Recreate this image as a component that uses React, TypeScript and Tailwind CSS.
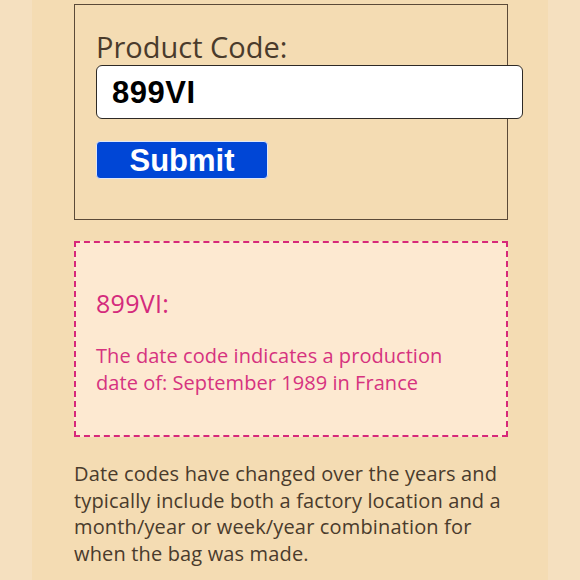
export default function App() {
  const body = { fontFamily: '"Open Sans", "Noto Sans", sans-serif' };
  return (
    <div className="min-h-[580px] w-full bg-[#f5e0bf] flex justify-center overflow-hidden">
      <div className="w-[516px] min-h-[580px] bg-[#f4dcb3] pl-[42px] pt-[4px]">
        <div className="w-[434px] h-[216px] border border-[#5b4a38] pl-[21px] pt-[24px]">
          <div className="text-[29px] leading-[36px] text-[#4a3b2c]" style={body}>
            Product Code:
          </div>
          <div className="w-[427px] h-[54px] bg-white border-[1.5px] border-[#2e2a26] rounded-[6px] flex items-center pl-[15px]">
            <span className="text-[31px] font-semibold text-black leading-none tracking-[0.5px]" style={{ fontFamily: '"Liberation Sans", Arial, sans-serif' }}>
              899VI
            </span>
          </div>
          <button className="mt-[22px] w-[172px] h-[38px] bg-[#0046d6] border border-[#dfe6f7] rounded-[4px] flex items-center justify-center">
            <span className="text-[31px] font-bold text-white leading-none" style={{ fontFamily: '"Liberation Sans", Arial, sans-serif' }}>
              Submit
            </span>
          </button>
        </div>
        <div className="mt-[21px] w-[434px] h-[196px] border-[2.5px] border-dashed border-[#d7287a] bg-[#fde9d1] pl-[20px] pt-[45px]" style={body}>
          <div className="text-[25px] leading-[30px] font-medium tracking-[0.3px] text-[#d42a7c]">899VI:</div>
          <div className="mt-[24px] text-[20px] leading-[27px] tracking-[0.05px] text-[#d6337f] w-[370px]">
            The date code indicates a production date of: September 1989 in France
          </div>
        </div>
        <div className="mt-[24px] w-[436px] text-[20px] leading-[26.5px] tracking-[0.15px] text-[#4a3b2c]" style={body}>
          Date codes have changed over the years and typically include both a factory location and a month/year or week/year combination for when the bag was made.
        </div>
      </div>
    </div>
  );
}
